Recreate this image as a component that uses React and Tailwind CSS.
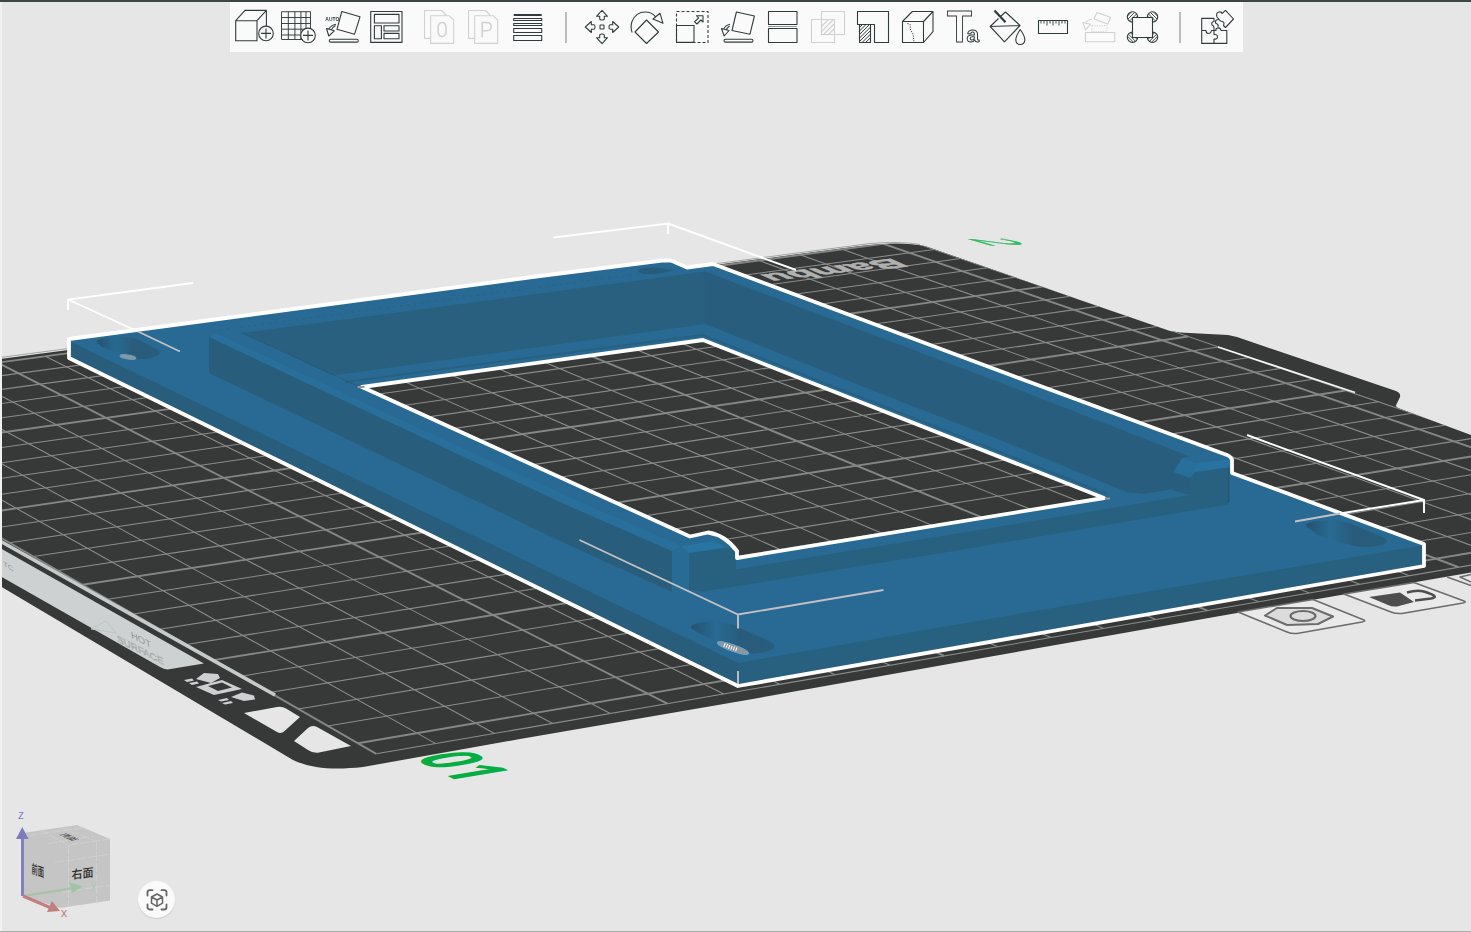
import React from "react";

/* ---------- perspective of the build plate ---------- */

// Known plate positions in millimetres and where they fall on the canvas.
const ANCHORS = [
  [256, 0, 376, 755],
  [250, 0, 359.3, 744.3],
  [200, 0, 216.7, 660],
  [150, 0, 82.7, 584],
  [150, 50, 350, 542.7],
  [200, 50, 490, 615],
  [100, 150, 713.3, 406.3],
  [0, 250, 885, 244],
  [50, 250, 1016.7, 290],
  [100, 250, 1161.7, 340.7],
  [150, 250, 1318.3, 395.7],
  [250, 200, 1437, 556.7],
  [0, 60, 45, 356],
];

function solve(m, v) {
  const n = v.length;
  const a = m.map((row, i) => [...row, v[i]]);
  for (let c = 0; c < n; c++) {
    let p = c;
    for (let r = c + 1; r < n; r++) if (Math.abs(a[r][c]) > Math.abs(a[p][c])) p = r;
    [a[c], a[p]] = [a[p], a[c]];
    for (let r = 0; r < n; r++) {
      if (r === c) continue;
      const f = a[r][c] / a[c][c];
      for (let k = c; k <= n; k++) a[r][k] -= f * a[c][k];
    }
  }
  return a.map((row, i) => row[n] / row[i]);
}

function fitPlane(points) {
  const rows = [];
  const rhs = [];
  points.forEach(([px, py, sx, sy]) => {
    const x = px / 256, y = py / 256, u = sx / 1000, v = sy / 1000;
    rows.push([x, y, 1, 0, 0, 0, -u * x, -u * y]);
    rhs.push(u);
    rows.push([0, 0, 0, x, y, 1, -v * x, -v * y]);
    rhs.push(v);
  });
  const ata = Array.from({ length: 8 }, (_, i) =>
    Array.from({ length: 8 }, (_, j) => rows.reduce((s, r) => s + r[i] * r[j], 0))
  );
  const atb = Array.from({ length: 8 }, (_, i) => rows.reduce((s, r, k) => s + r[i] * rhs[k], 0));
  return solve(ata, atb);
}

const H = fitPlane(ANCHORS);
const project = (px, py) => {
  const x = px / 256, y = py / 256;
  const w = H[6] * x + H[7] * y + 1;
  return [(1000 * (H[0] * x + H[1] * y + H[2])) / w, (1000 * (H[3] * x + H[4] * y + H[5])) / w];
};

const STEPS = [...Array.from({ length: 26 }, (_, i) => i * 10), 256];

function GridLines() {
  return STEPS.flatMap((s) => {
    const bold = s % 50 === 0;
    const [ax, ay] = project(s, 0);
    const [bx, by] = project(s, 256);
    const [cx, cy] = project(0, s);
    const [dx, dy] = project(256, s);
    const width = bold ? 1.9 : 1.05;
    const color = bold ? "#858785" : "#8b8d8b";
    return [
      <line key={"x" + s} x1={ax} y1={ay} x2={bx} y2={by} stroke={color} strokeWidth={width} />,
      <line key={"y" + s} x1={cx} y1={cy} x2={dx} y2={dy} stroke={color} strokeWidth={width} />,
    ];
  });
}

const PLATE =
  "M0 359 L860 246 Q900 241 925 246 L1040 286 L1080 300 L1170 331 L1180 332.5 L1228 335 L1237 337 L1396 391 Q1401 393 1400 397 L1395.7 406 L1398 408 L1471 435 V572.5 L1237 613 L960 662 L747 700 L520 739 L363 767 C335 770 312 769 293 760 L0 586 Z";

const BODY =
  "M69 339 L540 276 L662 260.5 L671 260.5 L687 267.5 L713 264 L1000 371 L1227 455 Q1232 457 1232 461 V473 L1424 544 V566 L738 686 L69 358 Z";
const OPENING =
  "M362 387 L703 340 L1104 498 L737 558 V551 Q725 535 708 532.5 L690 536.5 Z";

function Plate() {
  return (
    <g>
      <path d={PLATE} fill="#373938" />
      <clipPath id="plate"><path d={PLATE} /></clipPath>
      <g clipPath="url(#plate)"><GridLines /></g>
      <path d="M0 357.5 L870 243.5 Q900 241 920 244.5" fill="none" stroke="#a3a5a4" strokeWidth="1" />

      {/* warning label strip */}
      <path d="M0 541 L275 695" stroke="#c5caca" strokeWidth="3.6" />
      <path d="M0 548 L204 663.5 L169 669.3 Q165 670 160 667 L0 576 Z" fill="#cdd1d2" />
      <g fill="#8f9394" fontFamily="Liberation Sans" fontSize="11" fontStyle="italic">
        <text transform="matrix(.86 .45 .3 .95 132 638)">HOT</text>
        <text transform="matrix(.9 .45 .3 .95 118 642)" fill="none" stroke="#9a9e9f" strokeWidth=".5">SURFACE</text>
        <text transform="matrix(.86 .5 .3 .9 4 566)" fontSize="9">TC</text>
      </g>
      <path d="M91 629 l15 -8 l10 12 z" fill="none" stroke="#bfc3c4" />
      <g fill="#cdd1d2">
        <path d="M196 679 l8 -6 l14 1 l2 4 l-9 5 z M184 680 l8 -1.500 l2 2 l-7 1.500 z M189 683 l8 -1.500 l2 2 l-7 1.500 z" />
        <path fillRule="evenodd" d="M196 687 l26 -7 l20 9 l-28 6 z M208 686 l14 -3.500 l10 5 l-14 3.500 z" />
        <path d="M231 697 l11 -4.500 l12 3 l1 4 l-11 1.500 z M218 700 l9 -2 l2 2 l-8 1.500 z M222 703 l9 -2 l2 2 l-8 1.500 z" />
      </g>
      <path d="M244 713 L277 707 Q282 706 286 708.500 L300 717 L284 731.500 Q281 734 277 732 Z M294 741 L308 728 Q312 724.500 317 727 L351 746 L319 752.500 Q313 753.500 308 750 Z" fill="#e6e6e6" />

      {/* rear handle mark */}
      <path d="M1218 347 L1355 392.500" stroke="#f2f3f3" strokeWidth="1.800" />

      <text transform="matrix(-1.42 .175 -.9 -.4 893 258.500)" fontFamily="Liberation Sans" fontWeight="700" fontSize="28" fill="#b0b1b0" stroke="#b0b1b0" strokeWidth=".9">Bambu</text>
      <text transform="matrix(2.1 1.08 -3.8 .62 412.500 758)" fontFamily="Open Sans" fontWeight="700" fontSize="20" fill="#04ae42">01</text>
      <text transform="matrix(2.5 .72 -2.7 .05 966 238.500)" fontFamily="Open Sans" fontSize="19" fill="#2fbd62" stroke="#2fbd62" strokeWidth=".4">2</text>
    </g>
  );
}

function PlateTiles() {
  return (
    <g fill="none" stroke="#6b6c6b" strokeWidth="1.500" strokeLinejoin="round">
      <path d="M1238 612 L1313 599.500 L1364 620 Q1366 621 1362 622 L1297 633.500 Q1292 634 1287 632 Z" fill="#eaeaea" />
      <path d="M1265 615.500 L1277 608 L1312 608 L1333 616.500 L1318 624 L1287 625 Z" fill="#dcdcdc" strokeWidth="2" />
      <ellipse cx="1303" cy="616" rx="12.500" ry="5" strokeWidth="2.200" />
      <path d="M1344 594 L1414 582.500 L1464 601 Q1467 602 1463 603 L1402 613.500 Q1396 614 1391 612 Z" fill="#eaeaea" />
      <path d="M1369 597 L1400 592.500 L1414 602 L1397 606.500 Q1392 607 1388 605 Z" fill="#4d4e4d" stroke="none" />
      <path d="M1407 592.500 Q1419 589 1427 592.500 Q1440 597 1431 598.500 L1415 600.500" stroke="#4d4e4d" strokeWidth="2.500" />
      <path d="M1447 577 L1471 585.500 M1471 574.500 L1460 577 L1471 582" />
    </g>
  );
}

function Part() {
  return (
    <g>
      <defs>
        <linearGradient id="slot"><stop offset="0" stopColor="#245270" /><stop offset=".3" stopColor="#286a93" /><stop offset=".58" stopColor="#295c7b" /><stop offset="1" stopColor="#295d7c" /></linearGradient>
      </defs>
      <path d={BODY + OPENING} fillRule="evenodd" fill="#286a93" />

      {/* outer side faces */}
      <path d="M69 341 L738 663 V686 L69 358 Z" fill="#295d7c" />
      <path d="M738 663 L1000 617 L1424 545 V566 L738 686 Z" fill="#286080" />

      {/* interior walls */}
      <path d="M242 333 L705 271.500 V324 L333 375.500 Z" fill="#296080" />
      <path d="M705 271.500 L1000 382.500 L1190 456.500 L1182 458 L1173 472 V489 L1143 494 L1128 492.500 L1000 440 L897 400 L705 324 Z" fill="#295d7d" />
      <path d="M345 382 L703 335 L1107 494" fill="none" stroke="#286081" strokeWidth="2" />
      <path d="M213 331 L540 287 L700 266" fill="none" stroke="#26597a" strokeWidth=".6" strokeDasharray="2 5" />
      <path d="M242 333 L358 386" stroke="#20506f" strokeWidth=".8" strokeDasharray="1.500 1.500" />

      {/* long raised rail */}
      <path d="M209 337 L560 502 L672 551 V592 L560 541 L209 373 Z" fill="#295d7c" />
      <path d="M209 337 L216 333 L360 401 L560 493 L681 546 L672 551 L560 502 Z" fill="#28709b" />

      {/* front rail and its end blocks */}
      <path d="M689 553 L726 547.500 L736 552 V569.500 L960 533 L1190 495 V478 L1195 472 L1230 467 V502 L1227 504.500 L960 550 L703 591.500 L689 590 Z" fill="#286080" />
      <path d="M672 551 L681 546 L689 553 V592 L672 592 Z" fill="#286b95" />
      <path d="M681 546.500 L714 541 L726 547.500 L689 553 Z" fill="#2874a3" />
      <path d="M1182 458 L1197 463 L1190 478 L1174 472 Z" fill="#286f9c" />
      <path d="M1197 463 L1230 459.500 V467 L1195 472 L1190 478 Z" fill="#2873a1" />
      <path d="M1173 472 L1190 478 V495 L1172 490 Z" fill="#295d7d" />
      <path d="M1228.500 468 V503" stroke="#245573" strokeWidth="1" />

      {/* mounting slots */}
      <path d="M96.500 342 C97 336.500 130 335 138 339.500 L158 350 C166 356 145 361.500 130 358 L102 347 Z" fill="url(#slot)" />
      <ellipse cx="128" cy="357" rx="8" ry="2" transform="rotate(9 128 357)" fill="#8f9699" stroke="#69a2c4" />
      <path d="M690.700 628 C691 620 727 619 738 627 L771 642 C783 649 760 656 744 652.500 L706 637 Z" fill="url(#slot)" />
      <ellipse cx="733" cy="648" rx="16.500" ry="3.200" transform="rotate(20 733 648)" fill="#929698" stroke="#69a2c4" />
      <path d="M724 645 l14 5" stroke="#fff" strokeWidth="4" strokeDasharray="1 1.500" />
      <path d="M1306 526 C1306 519 1343 519 1354 525 L1385 538 C1396 546 1362 550 1347 544 L1318 535 Z" fill="url(#slot)" />
      <path d="M638 271 C638 267 656 267 660 268 L673 270 Q660 275 648 274 Q639 273.500 638 271" fill="#275c7d" />

      {/* selection outline */}
      <g fill="none" stroke="#fff" strokeWidth="3.800" strokeLinejoin="round">
        <path d={BODY} />
        <path d={OPENING} />
      </g>
      <path d="M357.500 387 h7 M1105 498.500 h5" stroke="#9a9899" strokeWidth="2" />
    </g>
  );
}

function SelectionBrackets() {
  return (
    <g fill="none" strokeWidth="1.900">
      <g stroke="#fff">
        <path d="M193 283 L68 299.500 V310 M68 299.500 L138 331.500" />
        <path d="M553.500 237.500 L668 223.500 V234 M668 223.500 L796 270" />
        <path d="M1247 435 L1424 500 V513 M1424 500 L1340 513.500" />
      </g>
      <g stroke="#c3c0c2">
        <path d="M138 331.500 L180 351.500" />
        <path d="M1340 513.500 L1295 521.500" />
        <path d="M579.500 540 L738 614.500 L883.500 590 M738 614.500 V628.500 M738 671 V684" />
      </g>
    </g>
  );
}

function ViewCube() {
  return (
    <g>
      <path d="M23 833 L77 825 L110 839 V900.500 L60 908 L23 896 Z" fill="#c5c5c5" />
      <g stroke="#d0d0d0" strokeWidth=".9" fill="none" strokeDasharray="9 2">
        <path d="M68.500 845 V906 M96.500 841 V902 M55 862.500 L110 854 M62 892 L110 885.500" />
        <path d="M40 830 L68 845 L110 839 M60 827.500 L96 841 M48 843.500 L95 836 M30 835 L82 828" />
      </g>
      <g fontFamily="Noto Sans CJK SC" fill="#2c2c2c">
        <text transform="matrix(1 -.12 0 1.08 71.500 879)" fontSize="11" fontWeight="500">右面</text>
        <text transform="matrix(.55 .2 0 1.1 31.500 873)" fontSize="11.500" fontWeight="500">前面</text>
        <text transform="matrix(.8 .36 -.9 .22 58.500 834.500)" fontSize="9">顶面</text>
      </g>
      <path d="M23 896 L71 888.500" stroke="#a9c4aa" strokeWidth="2.600" />
      <path d="M69 882 L83 886.500 L72 893 Z" fill="#a3c4a4" />
      <path d="M22.500 896 V838" stroke="#8081c0" strokeWidth="3" />
      <path d="M16 839 L22.300 827 L28.500 839 Z" fill="#7c7dbe" />
      <path d="M23 896 L50 907.500" stroke="#c17f80" strokeWidth="3.200" />
      <path d="M52 901 L60 911 L47 912 Z" fill="#c17f80" />
      <g fontFamily="Open Sans" fontSize="12.500">
        <text x="18" y="818.800" fill="#8081c0">z</text>
        <text x="60.700" y="917" fill="#c17f80">x</text>
        <text x="90.500" y="888" fill="#afc9b0">y</text>
      </g>
    </g>
  );
}

/* ---------- toolbar icons ---------- */

function Icon({ children, muted }) {
  return (
    <svg
      viewBox="0 0 40 40"
      className="h-10 w-10 shrink-0 overflow-visible will-change-transform"
      fill="none"
      stroke={muted ? "#d0d1d1" : "#303c3b"}
      strokeWidth={1.1}
      strokeLinejoin="round"
    >
      {children}
    </svg>
  );
}

const AddObject = () => (
  <Icon>
    <path d="M1.700 13.700 H23 V33.700 H1.700 Z L11 3.400 H32.400 L23 13.700 M32.400 3.400 V20 M23 33.700" />
    <circle cx="32" cy="26.400" r="7.300" fill="#fafafa" />
    <path d="M32 21.400 v10 M27 26.400 h10" />
  </Icon>
);
const AddPlate = () => (
  <Icon>
    <path d="M3.500 4.700 H32.500 V32.500 H3.500 Z M10.300 4.700 V32.500 M16.900 4.700 V32.500 M22.900 4.700 V32.500 M28 4.700 V32.500 M3.500 10.500 H32.500 M3.500 16.500 H32.500 M3.500 22.200 H32.500 M3.500 28 H32.500" strokeWidth=".95" />
    <circle cx="30" cy="28.400" r="7.300" fill="#fafafa" />
    <path d="M30 23.400 v10 M25 28.400 h10" />
  </Icon>
);
const AutoOrient = () => (
  <Icon>
    <text x="3.300" y="13.800" fontFamily="Liberation Sans" fontWeight="700" fontSize="5.600" textLength="14" lengthAdjust="spacingAndGlyphs" fill="#303c3b" stroke="none">AUTO</text>
    <path d="M19.800 4.500 L38 9.800 L32.500 27.300 L15 22.300 Z" />
    <path d="M4.500 21.500 L12.300 23.800 L6.800 29 Z M6.800 22 Q9 18 14 17.200 M9.500 22.700 Q10.500 20 13.500 18.500" />
    <rect x="7.300" y="32.300" width="29" height="2.800" rx="1.400" />
  </Icon>
);
const Arrange = () => (
  <Icon>
    <path d="M4.700 4.500 H36 V35.400 H4.700 Z M8.400 7.400 H33 V16 H8.400 Z M8.400 18.700 H15.400 V31.700 H8.400 Z M18 18.700 H33 V24 H18 Z M18 26.400 H33 V31.700 H18 Z" />
  </Icon>
);
const Pages = ({ letter }) => (
  <Icon muted>
    <path d="M11.700 31.400 H5.500 V3.500 H22.500 L26.500 7.500 V8.700 M11.700 8.700 H30.300 L34.700 13 V36.400 H11.700 Z" />
    <text x="23.200" y="30" textAnchor="middle" fontFamily="Roboto" fontWeight="300" fontSize="21" fill="#d0d1d1" stroke="#d0d1d1" strokeWidth=".3">{letter}</text>
  </Icon>
);
const LayerHeight = () => (
  <Icon>
    <path d="M6.700 8 H34.700" strokeWidth="2" />
    <path d="M6.700 11.500 H34.700 V13.500 H6.700 Z M6.700 16.500 H34.700 V18.500 H6.700 Z M6.700 21.500 H34.700 V25.500 H6.700 Z M6.700 28.500 H34.700 V33.500 H6.700 Z" />
  </Icon>
);
const ArrowUp = ({ angle }) => (
  <path transform={`rotate(${angle} 20 20)`} d="M20 3.300 L25.500 9.300 H22.300 V12 Q22.300 13 20 13 Q17.700 13 17.700 12 V9.300 H14.500 Z" />
);
const Move = () => (
  <Icon>
    <ArrowUp angle={0} /><ArrowUp angle={90} /><ArrowUp angle={180} /><ArrowUp angle={270} />
    <rect x="18" y="18" width="4" height="4" rx=".5" />
  </Icon>
);
const Rotate = () => (
  <Icon>
    <path d="M19.500 13 L31.500 25 L19.500 36.500 L8 25 Z M5.200 25.500 Q3 20 5 14.500 Q9 5 18 5 Q25 5 28.300 9.500 M26 12 L33 6.300 L36 16.300 Z" />
  </Icon>
);
const Scale = () => (
  <Icon>
    <rect x="4.500" y="4.500" width="31.500" height="31" strokeDasharray="3 2" />
    <path d="M4.500 18.500 H22 V35.400 H4.500 Z" />
    <path d="M31 8.700 V15 L28.800 13 L25 17 L22.500 14.800 L26.600 11 L24.500 8.700 Z" />
  </Icon>
);
const LayOnFace = () => (
  <Icon>
    <path d="M19.400 5 L37.400 9 L33 27.200 L15 23.500 Z M4.500 21.500 L12 23.500 L7.200 29 Z M6.800 22 Q8.500 18 13 17.200 M9.300 22.700 Q10.500 20.500 12.500 19" />
    <rect x="7" y="32.300" width="29" height="2.800" rx="1.400" />
  </Icon>
);
const Cut = () => (
  <Icon>
    <path d="M6.500 4.500 H35 V17.500 H6.500 Z M6.500 21.500 H35 V35.500 H6.500 Z" />
    <path d="M6.500 19.500 H35" strokeDasharray="1 1" />
  </Icon>
);
const Boolean = () => (
  <Icon muted>
    <path d="M14.500 4.500 H37.500 V27.500 H14.500 Z M4.500 12.500 H27.500 V35.500 H4.500 Z" />
    <path d="M15 19 L21 13 M15 24 L26 13 M17 27 L27 17 M22 27 L27 22" />
  </Icon>
);
const Supports = () => (
  <Icon>
    <path d="M5.500 4.500 H36.500 V35.500 H22.500 V17.500 H5.500 Z M7.500 17.500 H18.500 V35.500 H7.500 Z" />
    <path d="M7 21 L10.500 17.500 M7 24.500 L14 17.500 M7 28 L17.500 17.500 M7 31.500 L18.300 20.300 M7 35 L18.300 23.800 M10.200 35.400 L18.300 27.300 M13.700 35.400 L18.300 30.800" strokeWidth="1" />
  </Icon>
);
const Seam = () => (
  <Icon>
    <path d="M5.500 14.500 H26.500 V35.500 H5.500 Z L15.300 4.500 H36 L26.500 14.500 M36 4.500 V24.700 L26.500 35.500" />
    <path d="M10.500 16.500 L13 17.500 L13.500 23 L16 27 L17 35" strokeDasharray="1 1.400" />
  </Icon>
);
const TextShape = () => (
  <Icon>
    <g fontFamily="Liberation Sans" fontWeight="700" strokeWidth="1">
      <text x="5" y="35.200" fontSize="44.500" textLength="25" lengthAdjust="spacingAndGlyphs">T</text>
      <text x="24.500" y="35.200" fontSize="22.500">a</text>
    </g>
  </Icon>
);
const ColorPaint = () => (
  <Icon>
    <path d="M13.500 9.500 L18.500 5 L33 18.500 L17.500 34.800 L3.200 19.500 L11.500 11.500 M3.200 19.500 L33 18.500 M33.200 22.500 Q38 29 37.800 33 Q37.500 37.500 33.300 37.500 Q29 37.500 28.800 33 Q28.800 29 33.200 22.500 Z" />
    <path d="M7.500 3.400 L18.500 15.200" strokeWidth="2.200" />
  </Icon>
);
const Measure = () => (
  <Icon>
    <path d="M6.500 13.500 H35.500 V26.500 H6.500 Z" />
    <path d="M9 13.500 v3 M12 13.500 v3 M15 13.500 v5 M18 13.500 v3 M21 13.500 v5 M24 13.500 v3 M27 13.500 v5 M30 13.500 v3 M33 13.500 v3" strokeWidth=".9" />
  </Icon>
);
const Assemble = () => (
  <Icon muted>
    <path d="M20 5.500 L33.500 10.300 L30.800 17 L17 12 Z M8.500 25.500 H37.800 V34.700 H8.500 Z M5.800 15.500 L13.500 17.200 L8.500 23 Z M9 15.500 Q11 12.500 15 12" />
    <rect x="15" y="18.700" width="15" height="6" strokeDasharray="1.200 1.200" />
  </Icon>
);
const BrimEars = () => (
  <Icon>
    {[[10.5, 10, 1], [30.5, 10, -1], [10.5, 30.3, -1], [30.5, 30.3, 1]].map(([x, y, flip]) => (
      <g key={x + "-" + y} transform={`translate(${x} ${y}) scale(${flip} 1)`}>
        <circle r="5.200" />
        <path d="M-4.500 2 L2 -4.500 M-3 4 L4 -3 M-5 -1 L-1 -5 M-1 5 L5 -1" strokeWidth=".9" />
      </g>
    ))}
    <rect x="10.500" y="10.500" width="20" height="20" fill="#fafafa" />
  </Icon>
);
const AssemblyView = () => (
  <Icon>
    <path d="M4.700 23.500 V11.400 H17 V14.500 Q14 15 15 18 Q17.500 19 17 23.500 H14.500 Q14 26.500 11.500 26.500 Q9 26.500 9 23.500 Z" />
    <path d="M4.700 23.500 V36.400 H29.800 V23.500 H24 Q23.500 20.500 20.500 21 Q18.500 21.500 19 23.500 H17 V27.500 Q20.500 27 20.500 30 Q20.500 32.500 17 32 V36.400" />
    <path d="M20 10 L22 12.500 Q18 12 18.500 16 Q22 17.500 21 20 M20 10 Q18.500 6 22 5 Q24.500 4.500 25 6.500 L28.500 3.300 L36.500 12 L28.500 20.500 L26.500 18.500 Q28 15 25 14.500 Q23.500 14.500 22 12.500" />
  </Icon>
);

const PLATE_TOOLS = [
  ["Add", AddObject],
  ["Add plate", AddPlate],
  ["Auto orient", AutoOrient],
  ["Arrange", Arrange],
];
const EDIT_TOOLS = [
  ["Move", Move], ["Rotate", Rotate], ["Scale", Scale], ["Lay on face", LayOnFace], ["Cut", Cut],
  ["Mesh boolean", Boolean], ["Support painting", Supports], ["Seam painting", Seam], ["Text shape", TextShape],
  ["Color painting", ColorPaint], ["Measure", Measure], ["Assemble", Assemble], ["Brim ears", BrimEars],
];

const Divider = ({ className }) => (
  <div className={`flex shrink-0 justify-center ${className}`}>
    <div className="h-[31px] w-[2px] bg-[#bbbdbd]" />
  </div>
);

const Tool = ({ label, className, children }) => (
  <button aria-label={label} className={`flex h-[50px] shrink-0 items-center justify-center ${className}`}>{children}</button>
);

function Toolbar() {
  return (
    <nav className="relative ml-[230px] flex h-[50px] w-[1013px] items-center bg-[#fafafa] pl-[2px]">
      {PLATE_TOOLS.map(([label, Glyph]) => (
        <Tool key={label} label={label} className="w-[44px]"><Glyph /></Tool>
      ))}
      <div className="ml-[9px] flex">
        <Tool label="Split to objects" className="w-[44px]"><Pages letter="0" /></Tool>
        <Tool label="Split to parts" className="w-[44px]"><Pages letter="P" /></Tool>
        <Tool label="Variable layer height" className="w-[44px]"><LayerHeight /></Tool>
      </div>
      <Divider className="w-[30px] pl-[4px]" />
      {EDIT_TOOLS.map(([label, Glyph]) => (
        <Tool key={label} label={label} className="w-[45px]"><Glyph /></Tool>
      ))}
      <Divider className="w-[33px] pr-px" />
      <Tool label="Assembly view" className="w-[40px]"><AssemblyView /></Tool>
    </nav>
  );
}

export default function App() {
  return (
    <main className="relative flex h-[932px] w-[1471px] flex-col overflow-hidden border-t-2 border-b border-t-[#3b4645] border-b-[#adadad] bg-[#e6e6e6]">
      <svg viewBox="0 2 1471 929" className="absolute inset-0 h-[929px] w-[1471px]">
        <Plate />
        <PlateTiles />
        <Part />
        <SelectionBrackets />
        <path d="M1 2 V931" stroke="#f1f1f1" strokeWidth="2" />
        <ViewCube />
      </svg>
      <Toolbar />
      <footer className="relative mt-auto flex pb-[13px] pl-[138px]">
        <button aria-label="Fit view" className="flex h-[37px] w-[37px] items-center justify-center rounded-full bg-[#fafafa] shadow-[0_1px_1px_#cccccc]">
          <svg viewBox="0 0 24 24" className="h-6 w-6" fill="none" stroke="#646665" strokeWidth="1.800" strokeLinecap="round" strokeLinejoin="round">
            <path d="M2.500 7.500 V4.500 Q2.500 2.200 5 2.200 H7.500 M16.500 2.200 H19 Q21.500 2.200 21.500 4.500 V7.500 M21.500 16.500 V19.200 Q21.500 21.500 19 21.500 H16.500 M7.500 21.500 H5 Q2.500 21.500 2.500 19.200 V16.500" />
            <path d="M12 6 L17.500 9 V15.200 L12 18.300 L6.500 15.200 V9 Z M6.500 9 L12 12 L17.500 9 M12 12 V18.300" strokeWidth="1.500" />
          </svg>
        </button>
      </footer>
    </main>
  );
}
